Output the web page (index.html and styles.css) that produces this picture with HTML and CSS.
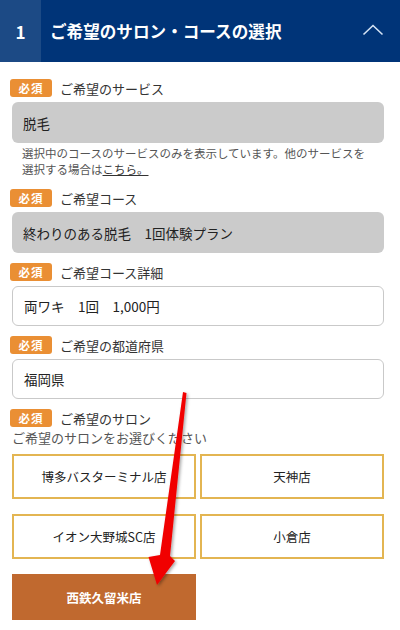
FILE: index.html
```html
<!DOCTYPE html>
<html lang="ja">
<head>
<meta charset="utf-8">
<link rel="stylesheet" href="styles.css">
</head>
<body>
<div class="page">
  <header class="head">
    <div class="num">1</div>
    <div class="title">ご希望のサロン・コースの選択</div>
    <svg class="chev" width="22" height="12" viewBox="0 0 22 12"><polyline points="1.5,10.5 11,1.5 20.5,10.5" fill="none" stroke="#d4e3f4" stroke-width="1.6"/></svg>
  </header>
  <main class="form">
    <div class="field">
      <div class="label"><span class="badge">必須</span><span class="ltext">ご希望のサービス</span></div>
      <div class="box gray">脱毛</div>
      <p class="note"><span class="nl">選択中のコースのサービスのみを表示しています。他のサービスを</span><span class="nl">選択する場合は<a class="link">こちら。</a></span></p>
    </div>
    <div class="field">
      <div class="label"><span class="badge">必須</span><span class="ltext">ご希望コース</span></div>
      <div class="box gray">終わりのある脱毛　1回体験プラン</div>
    </div>
    <div class="field">
      <div class="label"><span class="badge">必須</span><span class="ltext">ご希望コース詳細</span></div>
      <div class="box white">両ワキ　1回　1,000円</div>
    </div>
    <div class="field">
      <div class="label"><span class="badge">必須</span><span class="ltext">ご希望の都道府県</span></div>
      <div class="box white">福岡県</div>
    </div>
    <div class="field salon">
      <div class="label"><span class="badge">必須</span><span class="ltext">ご希望のサロン</span></div>
      <div class="sub">ご希望のサロンをお選びください</div>
      <div class="grid">
        <div class="opt">博多バスターミナル店</div>
        <div class="opt">天神店</div>
        <div class="opt">イオン大野城SC店</div>
        <div class="opt">小倉店</div>
        <div class="opt on">西鉄久留米店</div>
      </div>
    </div>
  </main>
  <svg class="arrow" width="400" height="630" viewBox="0 0 400 630">
    <defs>
      <filter id="sh" x="-20%" y="-20%" width="140%" height="140%">
        <feDropShadow dx="1.5" dy="1.5" stdDeviation="1.5" flood-color="#000" flood-opacity="0.35"/>
      </filter>
    </defs>
    <polygon points="183,392 186.5,393 170,556 175,561 157,585 148.5,557 160,555" fill="#f10000" filter="url(#sh)"/>
  </svg>
</div>
</body>
</html>
```
FILE: styles.css
```css
* { box-sizing: border-box; }
html, body { margin: 0; padding: 0; background: #fff; }
body {
  font-family: "Noto Sans CJK JP", "Noto Sans", sans-serif;
  color: #333;
  width: 400px;
  height: 630px;
  overflow: hidden;
}
.page { position: relative; width: 400px; height: 630px; }
.head {
  display: flex;
  align-items: center;
  height: 62px;
  background: #003478;
  color: #fff;
}
.num {
  width: 41px;
  height: 100%;
  background: #1c4a85;
  display: flex;
  align-items: center;
  justify-content: center;
  font-size: 17px;
  font-weight: bold;
}
.title {
  flex: 1;
  padding-left: 9px;
  font-size: 16.6px;
  font-weight: bold;
  letter-spacing: 0;
}
.chev { margin-right: 16px; margin-top: -2px; }
.form { padding: 17px 16px 0 12px; }
.field { margin-bottom: 10px; }
.label {
  display: flex;
  align-items: center;
  height: 18px;
  margin-left: -2px;
}
.badge {
  display: inline-flex;
  align-items: center;
  justify-content: center;
  width: 42px;
  height: 18px;
  border-radius: 3px;
  background: #ea8f34;
  color: #fff;
  font-size: 11.5px;
  font-weight: bold;
  letter-spacing: 1px;
}
.ltext { margin-left: 8px; font-size: 13px; color: #333; }
.box {
  margin-top: 5px;
  height: 40px;
  border-radius: 6px;
  padding: 0 11px;
  display: flex;
  align-items: center;
  font-size: 13.5px;
  color: #222;
}
.gray { background: #cbcbcb; height: 41px; }
.white { background: #fff; border: 1px solid #c9c9c9; }
.note {
  margin: 2px 0 0;
  padding: 0 12px 0 10px;
  font-size: 11.5px;
  line-height: 16px;
  color: #555;
}
.nl { display: block; }
.link { color: #333; text-decoration: underline; }
.field:nth-child(2) { margin-top: 12px; }
.sub { margin-top: 3px; font-size: 13px; color: #555; line-height: 16px; }
.grid {
  margin-top: 8px;
  display: grid;
  grid-template-columns: 184px 184px;
  column-gap: 4px;
  row-gap: 15px;
}
.opt {
  height: 45px;
  border: 2px solid #e3b552;
  display: flex;
  align-items: center;
  justify-content: center;
  font-size: 12.5px;
  color: #222;
}
.opt.on {
  background: #c0692f;
  border-color: #c0692f;
  color: #fff;
  font-weight: bold;
  height: 46px;
}
.arrow { position: absolute; left: 0; top: 0; pointer-events: none; }
```
